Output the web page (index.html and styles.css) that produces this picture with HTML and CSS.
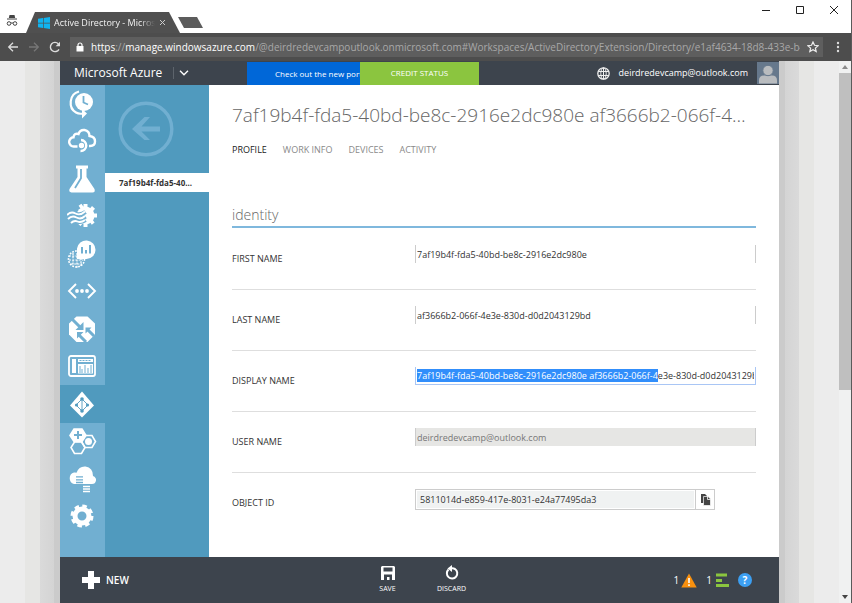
FILE: index.html
```
<!DOCTYPE html>
<html lang="en">
<head>
<meta charset="utf-8">
<title>Active Directory - Microsoft Azure</title>
<link rel="stylesheet" href="styles.css">
</head>
<body>
<div class="window">
  <header class="titlebar">
    <svg class="incognito" width="12" height="13" viewBox="0 0 12 13"><path d="M3.5 1h5l.7 3H2.8z" fill="#444"/><path d="M1 5h10" stroke="#444" stroke-width="1"/><circle cx="3" cy="9.5" r="1.8" fill="none" stroke="#444"/><circle cx="9" cy="9.5" r="1.8" fill="none" stroke="#444"/><path d="M5 9h2" stroke="#444"/></svg>
    <div class="tab">
      <svg width="12" height="12" viewBox="0 0 12 12"><path d="M0 1.7 5 1v4.7H0zM5.7.9 12 0v5.7H5.7zM0 6.4h5V11l-5-.7zM5.7 6.4H12V12l-6.3-.9z" fill="#10b4f0"/></svg>
      <span class="tab-title">Active Directory - Microsoft Azure</span>
      <button class="plain" aria-label="Close tab"><svg width="7" height="7" viewBox="0 0 7 7"><path d="M1 1l5 5M6 1 1 6" stroke="#ccc"/></svg></button>
    </div>
    <button class="new-tab" aria-label="New tab"></button>
    <div class="win-controls">
      <button class="plain" aria-label="Minimize"><svg width="10" height="10" viewBox="0 0 10 10"><path d="M1 5.5h8" stroke="#222"/></svg></button>
      <button class="plain" aria-label="Maximize"><svg width="10" height="10" viewBox="0 0 10 10"><path d="M1.5 1.5h7v7h-7z" fill="none" stroke="#222"/></svg></button>
      <button class="plain" aria-label="Close"><svg width="10" height="10" viewBox="0 0 10 10"><path d="M1 1l8 8M9 1 1 9" stroke="#222"/></svg></button>
    </div>
  </header>
  <div class="toolbar">
    <button class="plain" aria-label="Back"><svg width="12" height="12" viewBox="0 0 12 12"><path d="M11 6H2M6 1.7 1.7 6 6 10.3" fill="none" stroke="#ddd" stroke-width="1.3"/></svg></button>
    <button class="plain" aria-label="Forward"><svg width="12" height="12" viewBox="0 0 12 12"><path d="M1 6h9M6 1.7 10.3 6 6 10.3" fill="none" stroke="#777" stroke-width="1.3"/></svg></button>
    <button class="plain" aria-label="Reload"><svg width="12" height="12" viewBox="0 0 12 12"><path d="M10 8.3A4.6 4.6 0 1 1 9.3 2.8" fill="none" stroke="#ddd" stroke-width="1.4"/><path d="M11 .8v4.4H6.6z" fill="#ddd"/></svg></button>
    <div class="address">
      <svg width="8" height="10" viewBox="0 0 8 10"><path d="M1 4h6.500v5.500H.5V4z" fill="#fff"/><path d="M2 4.500V3a2 2 0 0 1 4 0v1.500" fill="none" stroke="#fff" stroke-width="1.2"/></svg>
      <span class="url"><b>https</b>://<b>manage.windowsazure.com</b>/@deirdredevcampoutlook.onmicrosoft.com#Workspaces/ActiveDirectoryExtension/Directory/e1af4634-18d8-433e-b4c2</span>
      <button class="plain" aria-label="Bookmark"><svg width="12" height="12" viewBox="0 0 12 12"><path d="m6 1 1.500 3.300 3.600.4-2.700 2.400.8 3.500L6 8.800l-3.200 1.800.8-3.500L.9 4.700l3.600-.4z" fill="none" stroke="#eee" stroke-width="1.200"/></svg></button>
    </div>
    <button class="plain" aria-label="Menu"><svg width="4" height="12" viewBox="0 0 4 12" fill="#ddd"><circle cx="2" cy="2" r="1.200"/><circle cx="2" cy="6" r="1.200"/><circle cx="2" cy="10" r="1.200"/></svg></button>
  </div>
  <div class="viewport">
    <div class="page">
      <div class="app">
        <div class="topbar">
          <a class="brand" href="#">Microsoft Azure</a>
          <button class="plain drop" aria-label="Services"><svg width="10" height="6" viewBox="0 0 10 6"><path d="m1 .8 4 4 4-4" fill="none" stroke="#fff" stroke-width="1.400"/></svg></button>
          <a class="promo" href="#">Check out the new portal</a>
          <button class="credit">CREDIT STATUS</button>
          <button class="plain globe" aria-label="Language"><svg width="13" height="13" viewBox="0 0 13 13" fill="none" stroke="#eee"><circle cx="6.500" cy="6.500" r="5.700" stroke-width="1.300"/><ellipse cx="6.500" cy="6.500" rx="2.700" ry="5.700"/><path d="M6.500 1v11M1 4.500h11M1 8.500h11"/></svg></button>
          <span class="account">deirdredevcamp@outlook.com</span>
          <svg class="avatar" width="22" height="22" viewBox="0 0 22 22"><path d="M0 0h22v22H0z" fill="#66788c"/><path d="M2 21.500v-3q0-5 5-5h8q5 0 5 5v3z" fill="#b9bcbf"/><circle cx="11" cy="8.500" r="5.200" fill="#b9bcbf" stroke="#66788c"/></svg>
        </div>
        <div class="body">
          <nav class="rail" aria-label="Services">
            <a href="#" aria-label="Scheduler"><svg width="30" height="30" viewBox="0 0 30 30"><circle cx="17" cy="13" r="9" fill="#fff"/><path d="M16.500 7v6.500l4.500 2" fill="none" stroke="#71afd1" stroke-width="1.800"/><path d="M12 2.500C2 5 1 19 9 23.500q3 1.800 7 1" fill="none" stroke="#fff" stroke-width="2.200"/><path d="m15 20 5 4.500-5 5z" fill="#fff"/></svg></a>
            <a href="#" aria-label="API Management"><svg width="30" height="30" viewBox="0 0 30 30" fill="none" stroke="#fff" stroke-width="2.400"><path d="M10.500 20.500H7a4.600 4.600 0 0 1-.5-9.200Q7 7 11.500 8 13 3.500 17.500 4q5 1 5 6Q28 10.500 28 15.500q0 4.500-5 4.500h-1"/><path d="M14 14a5.500 5.500 0 1 1-.5 11"/><circle cx="14.500" cy="19.500" r="1.500" fill="#fff"/></svg></a>
            <a href="#" aria-label="Machine Learning"><svg width="30" height="30" viewBox="0 0 30 30"><path d="M9 1.500h12v3h-1.500V13l8 12q1 3.500-2 3.500h-21q-3-.5-2-3.500l8-12V4.500H9z" fill="#fff"/><path d="M14 5v9.300L8 24" fill="none" stroke="#71afd1" stroke-width="1.800"/></svg></a>
            <a href="#" aria-label="Stream Analytics"><svg width="30" height="30" viewBox="0 0 30 30"><g fill="#fff"><circle cx="18.500" cy="14.500" r="9"/><path d="M16.500 3h4v23h-4zM9 12.500h21v4H9zM11.600 4.800l2.800-2 13.200 18.600-2.800 2.400zM25 5l3 2.800L13.500 25l-3-2.800z"/></g><path d="M0 14q4-4 8.500-1.500t10-1.500M1 18q4-4 8.500-1.500t9-1M4 22q3-3 6.500-1.500t8-1.500" fill="none" stroke="#71afd1" stroke-width="4.200"/><path d="M0 14q4-4 8.500-1.500t9.500-2M1 18q4-4 8.500-1.500t8.500-1.500M4 22q3-3 6.500-1.500t7.500-1.500" fill="none" stroke="#fff" stroke-width="1.900"/></svg></a>
            <a href="#" aria-label="Operational Insights"><svg width="30" height="30" viewBox="0 0 30 30"><circle cx="9.500" cy="20" r="8" fill="none" stroke="#fff" stroke-width="1.600" stroke-dasharray="1.800 1.200"/><path d="M2 17h14M2 21h14M4 25h11M6 14v13M10 14v15M14 19v8" fill="none" stroke="#fff" stroke-width="1.200" stroke-dasharray="2 1.200"/><path d="M10 20V9.500A9.300 9.300 0 1 1 19.500 20z" fill="#fff"/><path d="M15 8v6.500M19 11v3.500M23 6v8.500" stroke="#71afd1" stroke-width="2"/></svg></a>
            <a href="#" aria-label="Visual Studio Online"><svg width="30" height="30" viewBox="0 0 30 30"><path d="M9 8 2 15l7 7M21 8l7 7-7 7" fill="none" stroke="#fff" stroke-width="1.900"/><g fill="#fff"><circle cx="10" cy="15" r="1.900"/><circle cx="15" cy="15" r="1.900"/><circle cx="20" cy="15" r="1.900"/></g></svg></a>
            <a href="#" aria-label="Traffic Manager"><svg width="30" height="30" viewBox="0 0 30 30"><path d="M9.500 2.500h11l7.500 7v11l-7.500 7.500h-11L2 20.500v-11z" fill="#fff"/><path d="m4 4 9 9M27 22l-6-6M19 28l-7-7" stroke="#71afd1" stroke-width="3"/><path d="M16.500 8v8H8.500zM18.500 13.500h6l-6 6zM10 18h6.500L10 24.500z" fill="#71afd1"/></svg></a>
            <a href="#" aria-label="RemoteApp"><svg width="30" height="30" viewBox="0 0 30 30"><rect x="2" y="5" width="26" height="20" rx="2" fill="none" stroke="#fff" stroke-width="1.800"/><path d="M5 8h4v14H5zM11 8h15v3H11zM11 13h15v9.500H11z" fill="#fff"/><path d="M12.500 9.500h12" stroke="#71afd1" stroke-dasharray="2 1"/><path d="M13 15v7M15 18v4M18 14v8M21 17v5M24 14v8" stroke="#71afd1"/></svg></a>
            <a class="current" href="#" aria-label="Active Directory" aria-current="page"><svg width="30" height="30" viewBox="0 0 30 30"><path d="m15 2.500 12 14-12 12-12-12z" fill="#fff"/><path d="m15 10-6 6 6 6 6-6zM15 10v12" fill="none" stroke="#509abe" stroke-width=".9"/><g fill="#509abe"><circle cx="15" cy="10" r="1.800"/><circle cx="9.500" cy="16" r="1.600"/><circle cx="20.500" cy="16" r="1.600"/><circle cx="15" cy="22" r="1.800"/></g></svg></a>
            <a href="#" aria-label="Marketplace"><svg width="30" height="30" viewBox="0 0 30 30" fill="none" stroke="#fff" stroke-width="1.600"><path d="M7 3h8l4 6.500-4 6H7L3 9.500z" fill="#fff"/><path d="M11 5v8M7 9h8" stroke="#71afd1" stroke-width="2"/><path d="M18 9.500h7l3.500 6-3.500 6h-7l-3.500-6z"/><circle cx="21.500" cy="15.500" r="2.700" fill="#fff"/><path d="M7.500 16h7l3.500 5.500-3.500 6h-7L4 21.500z"/></svg></a>
            <a href="#" aria-label="StorSimple"><svg width="30" height="30" viewBox="0 0 30 30"><path d="M7 20a6 6 0 0 1 0-11.500q1.500-.3 2.500.3Q12 2 18.500 2.500 26 3.500 26 12q3.500 1.500 3 4.500-.6 3.500-4 3.500z" fill="#fff"/><path d="M9 12.800h7M9 15.800h7M9 18.500h7" stroke="#71afd1" stroke-width="1.300"/><path d="M15 20.700h9" stroke="#71afd1" stroke-width="1.300"/><path d="M16 22.500h7M16 25h7M16 27.500h7" stroke="#fff" stroke-width="1.400"/></svg></a>
            <a href="#" aria-label="Settings"><svg width="30" height="30" viewBox="0 0 30 30"><circle cx="15" cy="15" r="7" fill="none" stroke="#fff" stroke-width="5"/><circle cx="15" cy="15" r="10" fill="none" stroke="#fff" stroke-width="3" stroke-dasharray="4.500 3.354"/></svg></a>
          </nav>
          <div class="side">
            <button class="plain back" aria-label="Back"><svg width="56" height="56" viewBox="0 0 56 56"><circle cx="28" cy="28" r="25.800" fill="none" stroke="#71afd1" stroke-width="3.400"/><path d="M14 28 26.500 16H32l-8.500 9.500H42v5H23.500L32 39h-5.500z" fill="#71afd1"/></svg></button>
            <a class="side-item" href="#">7af19b4f-fda5-40...</a>
          </div>
          <main class="content">
            <h1>7af19b4f-fda5-40bd-be8c-2916e2dc980e af3666b2-066f-4e3e-830d-d0d2043129bd</h1>
            <nav class="pivots">
              <a class="on" href="#">PROFILE</a><a href="#">WORK INFO</a><a href="#">DEVICES</a><a href="#">ACTIVITY</a>
            </nav>
            <h2>identity</h2>
            <form class="fields">
              <div class="row"><label for="first">FIRST NAME</label><input id="first" value="7af19b4f-fda5-40bd-be8c-2916e2dc980e"></div>
              <div class="row"><label for="last">LAST NAME</label><input id="last" value="af3666b2-066f-4e3e-830d-d0d2043129bd"></div>
              <div class="row"><label for="display">DISPLAY NAME</label><input id="display" value="7af19b4f-fda5-40bd-be8c-2916e2dc980e af3666b2-066f-4e3e-830d-d0d2043129bd"></div>
              <div class="row"><label for="user">USER NAME</label><input id="user" value="deirdredevcamp@outlook.com" disabled></div>
              <div class="row"><label for="object">OBJECT ID</label>
                <div class="copybox"><input id="object" value="5811014d-e859-417e-8031-e24a77495da3" readonly><button type="button" aria-label="Copy"><svg width="11" height="12" viewBox="0 0 11 12"><path d="M1 0h4l2 2v7H1z" fill="#444"/><path d="M3.500 2.500H8l2.500 2.500v6.500h-7z" fill="#444" stroke="#fff" stroke-width=".7"/><path d="M7.500 2.500v3h3" fill="none" stroke="#fff" stroke-width=".8"/></svg></button></div>
              </div>
            </form>
          </main>
        </div>
        <footer class="commands">
          <button class="plain new"><svg width="20" height="20" viewBox="0 0 20 20"><path d="M7 1h6v6h6v6h-6v6H7v-6H1V7h6z" fill="#fff"/></svg>NEW</button>
          <div class="actions">
            <button class="plain"><svg width="16" height="16" viewBox="0 0 16 16"><path d="M2 1h12l1 1v13H1V2z" fill="#fff"/><path d="M3.500 2.500h9v4h-9zM4 9.500h8V15H9.500v-3H7v3H4z" fill="#3d444d"/></svg>SAVE</button>
            <button class="plain"><svg width="16" height="16" viewBox="0 0 16 16"><path d="M4.500 4.500A5.200 5.200 0 1 0 11 4Q9 3 7 3.500" fill="none" stroke="#fff" stroke-width="2"/><path d="M8 0v7L3.500 3.500z" fill="#fff"/></svg>DISCARD</button>
          </div>
          <div class="status">
            <button class="plain">1<svg width="16" height="15" viewBox="0 0 16 15"><path d="m8 .5 7.700 14H.3z" fill="#f8900f"/><path d="M8 5v5M8 11.300v1.700" stroke="#fff" stroke-width="1.600"/></svg></button>
            <button class="plain">1<svg width="15" height="15" viewBox="0 0 15 15"><path d="M2 2h11M2 7.500h6M2 12.500h13" stroke="#8bc53f" stroke-width="3"/></svg></button>
            <button class="plain help" aria-label="Help">?</button>
          </div>
        </footer>
      </div>
    </div>
    <div class="scrollbar" aria-hidden="true">
      <svg width="12" height="12" viewBox="0 0 12 12"><path d="m6 4 3 4H3z" fill="#8a8a8a"/></svg>
      <div class="thumb"></div>
      <svg width="12" height="12" viewBox="0 0 12 12"><path d="m6 8 3-4H3z" fill="#444"/></svg>
    </div>
  </div>
</div>
<script src="app.js"></script>
</body>
</html>
```
FILE: styles.css
```
* { box-sizing: border-box; }
body {
  margin: 0;
  font: 9px/12px "Open Sans", "Noto Sans", sans-serif;
  color: #333;
}
a { color: inherit; text-decoration: none; }
svg { display: block; flex: none; }
button, input { font: inherit; color: inherit; }
.plain {
  display: flex;
  align-items: center;
  justify-content: center;
  padding: 0;
  border: 0;
  background: none;
}
.window {
  display: flex;
  flex-direction: column;
  height: 100vh;
  border-right: 1px solid #5a5a5a;
}

/* Browser frame */
.titlebar {
  flex: none;
  display: flex;
  align-items: flex-end;
  height: 33px;
  padding-left: 6px;
  background: #fff;
}
.incognito { margin-bottom: 6px; }
.tab {
  display: flex;
  align-items: center;
  gap: 4px;
  width: 154px;
  height: 21px;
  margin-left: 8px;
  padding: 0 14px 0 12px;
  background: #505050;
  color: #f2f2f2;
  clip-path: polygon(0 100%, 9px 0, 143px 0, 100% 100%);
}
.tab-title {
  flex: 1;
  overflow: hidden;
  white-space: nowrap;
  mask-image: linear-gradient(to right, #000 85%, transparent);
}
.new-tab {
  width: 25px;
  height: 11px;
  margin: 0 0 5px -2px;
  padding: 0;
  border: 0;
  background: #5c5c5c;
  clip-path: polygon(0 0, 19px 0, 100% 100%, 6px 100%);
}
.win-controls {
  display: flex;
  gap: 24px;
  align-self: flex-start;
  margin: 5px 12px 0 auto;
}
.toolbar {
  flex: none;
  display: flex;
  align-items: center;
  gap: 9px;
  height: 28px;
  padding: 0 7px;
  background: #4d4d4d;
}
.address {
  flex: 1;
  display: flex;
  align-items: center;
  gap: 7px;
  min-width: 0;
  height: 20px;
  padding: 0 4px 0 6px;
  background: #5e5e5e;
}
.toolbar > .plain { width: 12px; }
.url {
  flex: 1;
  overflow: hidden;
  color: #a8a8a8;
  font-size: 10px;
  line-height: 16px;
  white-space: nowrap;
}
.url b { color: #fff; font-weight: 400; }

/* Portal */
.viewport { flex: 1; display: flex; min-height: 0; }
.page {
  flex: 1;
  display: flex;
  min-width: 0;
  padding: 0 60px;
  background:
    linear-gradient(to right, #ececec 25px, #e6e6e4 25px, #e6e6e4 40px, #dadada 40px, #d4d4d4 54px, #cbcbcb 54px) left / 60px 100% no-repeat,
    linear-gradient(to left, #ececec 25px, #e6e6e4 25px, #e6e6e4 40px, #dadada 40px, #d4d4d4 54px, #cbcbcb 54px) right / 60px 100% no-repeat;
}
.app { flex: 1; display: flex; flex-direction: column; min-width: 0; }
.topbar {
  flex: none;
  display: flex;
  align-items: center;
  height: 24px;
  background: #3d444d;
  color: #fff;
}
.brand { width: 113px; padding-left: 14px; font-size: 12px; white-space: nowrap; }
.drop { width: 20px; height: 12px; border-left: 1px solid #5d646c; }
.promo {
  width: 148px;
  margin-left: 54px;
  padding-left: 28px;
  background: #0067d8;
  font-size: 8px;
  line-height: 23px;
  white-space: nowrap;
}
.credit {
  width: 119px;
  height: 23px;
  margin-left: -35px;
  padding: 0;
  border: 0;
  background: #8bc53f;
  font-size: 8px;
}
.globe { margin-left: auto; }
.account { margin: 0 9px; }
.body { flex: 1; display: flex; min-height: 0; background: #fff; }
.rail {
  display: grid;
  grid-auto-rows: 1fr;
  flex: none;
  width: 45px;
  padding-bottom: 22px;
  background: #71afd1;
}
.rail a { display: flex; align-items: center; padding-left: 7px; }
.rail .current { background: #509abe; }
.side { flex: none; width: 104px; background: #509abe; }
.back { margin: 16px 0 16px 13px; }
.side-item {
  display: block;
  padding-left: 14px;
  background: #fff;
  font-size: 8px;
  font-weight: 700;
  line-height: 19px;
}
.content { flex: 1; min-width: 0; padding: 13px 23px 0; overflow: hidden; }
h1 {
  margin: 0;
  overflow: hidden;
  color: #666;
  font-size: 19px;
  font-weight: 300;
  line-height: 34px;
  text-overflow: ellipsis;
  white-space: nowrap;
}
.pivots { display: flex; gap: 16px; margin-top: 12px; color: #8a8a8a; }
.pivots .on { color: #222; }
h2 {
  margin: 47px 0 0;
  border-bottom: 2px solid #7fb8dd;
  color: #666;
  font-size: 14px;
  font-weight: 300;
  line-height: 23px;
}
.fields { padding-top: 1px; }
.row {
  display: grid;
  grid-template-columns: 183px 1fr;
  align-items: start;
  height: 61px;
  padding-top: 16px;
  border-bottom: 1px solid #dedede;
}
.row:last-child { border-bottom: 0; }
.row label { padding-top: 8px; }
.row > input {
  width: 100%;
  height: 18px;
  padding: 0 1px;
  border: solid #ccc;
  border-width: 0 1px;
  outline: 0;
  background: #fff;
}
.row > input:focus { border-color: #a9c6f5; border-bottom-width: 1px; }
.row > input:disabled { background: #e6e6e4; color: #777; }
input::selection { background: #318efb; color: #fff; }
.copybox {
  display: flex;
  width: 300px;
  height: 21px;
  border: 1px solid #ccc;
}
.copybox input {
  flex: 1;
  min-width: 0;
  margin: 1px;
  padding: 0 3px;
  border: 0;
  background: #f0f2f2;
}
.copybox button {
  display: flex;
  align-items: center;
  justify-content: center;
  width: 19px;
  padding: 0;
  border: 0;
  border-left: 1px solid #ccc;
  background: #fff;
}
.commands {
  flex: none;
  display: grid;
  grid-template-columns: 1fr auto 1fr;
  align-items: center;
  height: 46px;
  padding: 0 21px;
  background: #3d444d;
  color: #fff;
  font-size: 10px;
}
.new { justify-self: start; gap: 5px; font-weight: 600; }
.actions { display: flex; gap: 20px; }
.actions .plain { flex-direction: column; gap: 2px; width: 44px; font-size: 7px; }
.status { display: flex; gap: 9px; justify-self: end; margin-right: 6px; }
.status .plain { gap: 2px; }
.status .help {
  width: 14px;
  height: 14px;
  border-radius: 50%;
  background: #3c9ff2;
  font-weight: 700;
}
.scrollbar {
  flex: none;
  display: flex;
  flex-direction: column;
  width: 12px;
  background: #f0f1f1;
}
.thumb { height: 317px; margin-bottom: auto; background: #bfbfbf; }
```
FILE: app.js
```
const display = document.getElementById("display");
display.focus();
display.setSelectionRange(0, 52);
```
